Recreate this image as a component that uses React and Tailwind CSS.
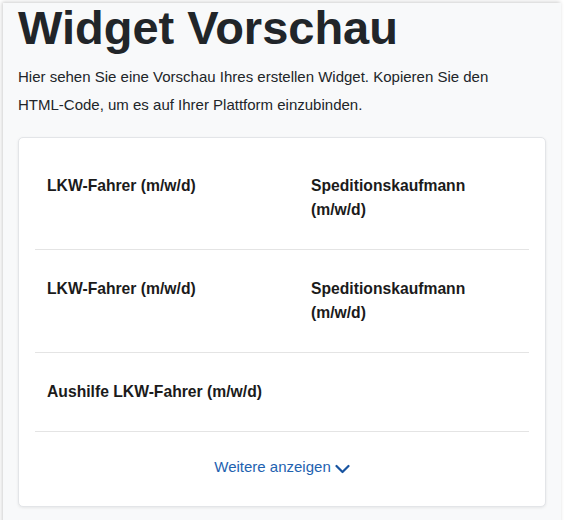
import React from "react";

const jobs = [
  ["LKW-Fahrer (m/w/d)", "Speditionskaufmann (m/w/d)"],
  ["LKW-Fahrer (m/w/d)", "Speditionskaufmann (m/w/d)"],
  ["Aushilfe LKW-Fahrer (m/w/d)", null],
];

const font = { fontFamily: "'Liberation Sans', Arial, sans-serif" };

export default function App() {
  return (
    <div className="w-[567px] h-[520px] bg-white overflow-hidden" style={font}>
      <div className="ml-[3px] mt-[3px] mr-[6px] h-[540px] bg-[#f8f9fa] shadow-[-1px_-1px_4px_rgba(0,0,0,0.2)] px-[15px] pt-px">
        <h1 className="text-[47px] leading-none font-bold text-[#212529]">Widget Vorschau</h1>
        <p className="mt-3 text-[15px] leading-7 text-[#212529]">
          Hier sehen Sie eine Vorschau Ihres erstellen Widget. Kopieren Sie den{" "}
          <span className="whitespace-nowrap">HTML-Code,</span> um es auf Ihrer Plattform einzubinden.
        </p>

        <div className="mt-[18px] bg-white border border-[#e3e5e8] rounded-[5px] shadow-[0_1px_3px_rgba(0,0,0,0.08)] px-4 pt-4 pb-4">
          {jobs.map(([links, rechts], i) => (
            <div
              key={i}
              className={`grid grid-cols-[264px_1fr] pl-[12px] pr-[20px] border-b border-[#e4e4e4] text-[15.7px] leading-6 font-bold text-[#1b1b1b] ${i === 0 ? "pt-5 pb-[27px]" : "py-[27px]"}`}
            >
              <div>{links}</div>
              <div className="w-[190px]">{rechts}</div>
            </div>
          ))}
          <div className="flex items-center justify-center gap-1 pt-[23px] pb-[11px]">
            <span className="text-[15px] leading-6 text-[#1e62b0]">Weitere anzeigen</span>
            <svg width="15" height="10" viewBox="0 0 15 10" fill="none" className="mt-[3px]">
              <path d="M1.5 2 L7.5 8 L13.5 2" stroke="#1753a0" strokeWidth="2.2" strokeLinecap="round" strokeLinejoin="round" />
            </svg>
          </div>
        </div>
      </div>
    </div>
  );
}
